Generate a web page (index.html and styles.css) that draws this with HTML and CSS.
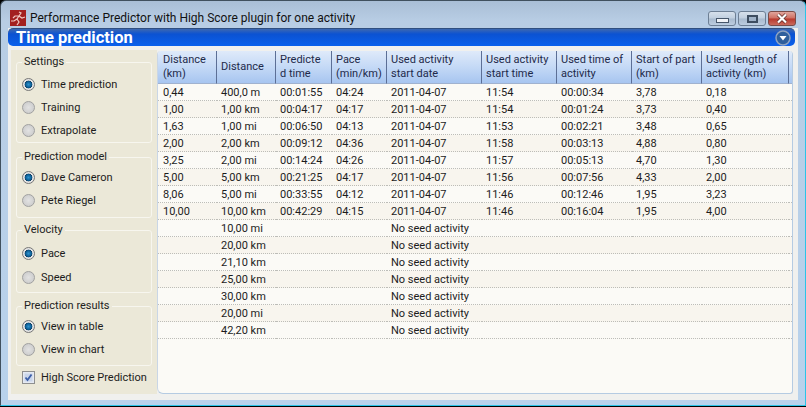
FILE: index.html
```html
<!DOCTYPE html>
<html lang="en">
  <head>
    <meta charset="UTF-8" />
    <meta name="viewport" content="width=device-width, initial-scale=1.0" />
    <title>Performance Predictor</title>
    <link rel="stylesheet" href="styles.css">
  </head>
  <body>
    <div class="ventana">
      <div class="titulo">
        <svg class="logo" width="16" height="16" viewBox="0 0 16 16">
          <rect width="16" height="16" fill="#a3201f" />
          <path d="M9 2l2 1-2 3 3 2 3-1M9 6L7 9l2 3-2 3M7 9L4 11 1 11M9 6L5 6 3 8" fill="none" stroke="#f0c8c2" stroke-width="1.2" />
        </svg>
        <span class="titulo-texto">Performance Predictor with High Score plugin for one activity</span>
        <div class="botones">
          <div class="boton"><span class="min"></span></div>
          <div class="boton"><span class="max"></span></div>
          <div class="boton cerrar">
            <svg width="16" height="11" viewBox="0 0 16 11">
              <path d="M4 1.5l8 8M12 1.5l-8 8" stroke="#5b2a26" stroke-width="3.6" />
              <path d="M4 1.5l8 8M12 1.5l-8 8" stroke="#fff" stroke-width="2.2" />
            </svg>
          </div>
        </div>
      </div>

      <div class="cliente">
        <div class="banda">
          <span>Time prediction</span>
          <div class="flecha">
            <svg width="16" height="16" viewBox="0 0 16 16">
              <circle cx="8" cy="8" r="7" fill="#2f5f9c" stroke="#8fa3c0" stroke-width="1.5" />
              <path d="M4.5 6h7L8 10.5z" fill="#fff" />
            </svg>
          </div>
        </div>

        <div class="cuerpo">
          <div class="lateral">
            <fieldset class="grupo g1">
              <legend>Settings</legend>
              <label><span class="radio activo"></span>Time prediction</label>
              <label><span class="radio"></span>Training</label>
              <label><span class="radio"></span>Extrapolate</label>
            </fieldset>
            <fieldset class="grupo g2">
              <legend>Prediction model</legend>
              <label><span class="radio activo"></span>Dave Cameron</label>
              <label><span class="radio"></span>Pete Riegel</label>
            </fieldset>
            <fieldset class="grupo g3">
              <legend>Velocity</legend>
              <label><span class="radio activo"></span>Pace</label>
              <label><span class="radio"></span>Speed</label>
            </fieldset>
            <fieldset class="grupo g4">
              <legend>Prediction results</legend>
              <label><span class="radio activo"></span>View in table</label>
              <label><span class="radio"></span>View in chart</label>
            </fieldset>
            <label class="marca">
              <svg class="check" width="13" height="13" viewBox="0 0 13 13">
                <rect x="0.5" y="0.5" width="12" height="12" fill="#e4e9f2" stroke="#8e8f8f" />
                <rect x="2.5" y="2.5" width="8" height="8" fill="#c9d5ea" />
                <path d="M3.5 6.5l2 2.5L9.5 3.5" fill="none" stroke="#3c5fa8" stroke-width="1.8" />
              </svg>
              High Score Prediction
            </label>
          </div>

          <div class="tabla-caja">
            <table>
              <colgroup>
                <col class="c-dist"><col class="c-dist"><col class="c-pred"><col class="c-pace"><col class="c-fecha"><col class="c-hora"><col class="c-hora"><col class="c-inicio"><col class="c-largo"><col>
              </colgroup>
              <thead>
                <tr>
                  <th>Distance<br>(km)</th>
                  <th>Distance</th>
                  <th>Predicte<br>d time</th>
                  <th>Pace<br>(min/km)</th>
                  <th>Used activity<br>start date</th>
                  <th>Used activity<br>start time</th>
                  <th>Used time of<br>activity</th>
                  <th>Start of part<br>(km)</th>
                  <th>Used length of<br>activity (km)</th>
                  <th></th>
                </tr>
              </thead>
              <tbody>
                <tr><td>0,44</td><td>400,0 m</td><td>00:01:55</td><td>04:24</td><td>2011-04-07</td><td>11:54</td><td>00:00:34</td><td>3,78</td><td>0,18</td><td></td></tr>
                <tr><td>1,00</td><td>1,00 km</td><td>00:04:17</td><td>04:17</td><td>2011-04-07</td><td>11:54</td><td>00:01:24</td><td>3,73</td><td>0,40</td><td></td></tr>
                <tr><td>1,63</td><td>1,00 mi</td><td>00:06:50</td><td>04:13</td><td>2011-04-07</td><td>11:53</td><td>00:02:21</td><td>3,48</td><td>0,65</td><td></td></tr>
                <tr><td>2,00</td><td>2,00 km</td><td>00:09:12</td><td>04:36</td><td>2011-04-07</td><td>11:58</td><td>00:03:13</td><td>4,88</td><td>0,80</td><td></td></tr>
                <tr><td>3,25</td><td>2,00 mi</td><td>00:14:24</td><td>04:26</td><td>2011-04-07</td><td>11:57</td><td>00:05:13</td><td>4,70</td><td>1,30</td><td></td></tr>
                <tr><td>5,00</td><td>5,00 km</td><td>00:21:25</td><td>04:17</td><td>2011-04-07</td><td>11:56</td><td>00:07:56</td><td>4,33</td><td>2,00</td><td></td></tr>
                <tr><td>8,06</td><td>5,00 mi</td><td>00:33:55</td><td>04:12</td><td>2011-04-07</td><td>11:46</td><td>00:12:46</td><td>1,95</td><td>3,23</td><td></td></tr>
                <tr><td>10,00</td><td>10,00 km</td><td>00:42:29</td><td>04:15</td><td>2011-04-07</td><td>11:46</td><td>00:16:04</td><td>1,95</td><td>4,00</td><td></td></tr>
                <tr><td></td><td>10,00 mi</td><td></td><td></td><td>No seed activity</td><td></td><td></td><td></td><td></td><td></td></tr>
                <tr><td></td><td>20,00 km</td><td></td><td></td><td>No seed activity</td><td></td><td></td><td></td><td></td><td></td></tr>
                <tr><td></td><td>21,10 km</td><td></td><td></td><td>No seed activity</td><td></td><td></td><td></td><td></td><td></td></tr>
                <tr><td></td><td>25,00 km</td><td></td><td></td><td>No seed activity</td><td></td><td></td><td></td><td></td><td></td></tr>
                <tr><td></td><td>30,00 km</td><td></td><td></td><td>No seed activity</td><td></td><td></td><td></td><td></td><td></td></tr>
                <tr><td></td><td>20,00 mi</td><td></td><td></td><td>No seed activity</td><td></td><td></td><td></td><td></td><td></td></tr>
                <tr><td></td><td>42,20 km</td><td></td><td></td><td>No seed activity</td><td></td><td></td><td></td><td></td><td></td></tr>
              </tbody>
            </table>
          </div>
        </div>
      </div>
    </div>
  </body>
</html>
```

FILE: styles.css
```css
html,
body {
  margin: 0;
  height: 100%;
  overflow: hidden;
}
body {
  background: #000;
  font-family: Roboto, "Open Sans", sans-serif;
  font-size: 11px;
  color: #1c1c1c;
}
.ventana {
  box-sizing: border-box;
  height: 406px;
  padding: 0 7px 5px 7px;
  background: linear-gradient(to bottom, #a9bed6 0px, #b8cde4 20px, #b8d2ec 100%);
  border: 1px solid #40505e;
  border-bottom-color: #2bc4e8;
  border-right-color: #2bc4e8;
  border-radius: 6px 6px 0 0;
  display: flex;
  flex-direction: column;
}
.titulo {
  height: 27px;
  display: flex;
  align-items: center;
  padding-left: 2px;
  flex-shrink: 0;
}
.logo {
  margin-right: 4px;
  margin-top: 6px;
}
.titulo-texto {
  font-size: 12px;
  color: #111;
  margin-top: 6px;
  white-space: nowrap;
}
.botones {
  margin-left: auto;
  margin-right: 2px;
  margin-top: 8px;
  display: flex;
  gap: 2px;
}
.boton {
  width: 26px;
  height: 13px;
  border: 1px solid #6d7f94;
  border-radius: 3px;
  background: linear-gradient(to bottom, #d6e0eb 0%, #c0cfdf 48%, #a8bace 52%, #bccde0 100%);
  display: flex;
  align-items: center;
  justify-content: center;
}
.cerrar {
  border-color: #7a4b47;
  background: linear-gradient(to bottom, #e0a59c 0%, #cf6f62 48%, #b8382c 52%, #c96a5d 100%);
}
.min {
  width: 11px;
  height: 3px;
  margin-top: 3px;
  background: #f0f3f7;
  border: 1px solid #46566a;
}
.max {
  width: 7px;
  height: 4px;
  background: #9fb2c8;
  border: 2px solid #3d4d60;
}
.cliente {
  flex: 1;
  display: flex;
  flex-direction: column;
  min-height: 0;
  background: #f0f0ee;
}
.banda {
  height: 18px;
  flex-shrink: 0;
  box-sizing: border-box;
  margin-right: 3px;
  padding: 0 4px 0 8px;
  display: flex;
  align-items: center;
  justify-content: space-between;
  border-radius: 5px;
  border-top: 1px solid #304f80;
  background: linear-gradient(to bottom, #3d68b0 0%, #0b52d2 30%, #0a60ec 100%);
  color: #fff;
  font-weight: bold;
  font-size: 16.5px;
}
.flecha {
  height: 16px;
}
.cuerpo {
  flex: 1;
  min-height: 0;
  display: flex;
  padding: 4px 5px 6px 3px;
}
.lateral {
  width: 146px;
  flex-shrink: 0;
  box-sizing: border-box;
  background: #ebe8d8;
  padding: 5px 5px 0 5px;
  display: flex;
  flex-direction: column;
}
.grupo {
  box-sizing: border-box;
  margin: 0;
  padding: 3px 0 0 5px;
  border: 1px solid #f7f6ef;
  border-radius: 3px;
  min-width: 0;
}
.grupo legend {
  padding: 0 2px;
  line-height: 14px;
  color: #222;
}
.grupo label {
  display: flex;
  align-items: center;
  height: 23px;
}
.g1 { height: 88px; margin-bottom: 7px; padding-top: 4px; }
.g2 { height: 68px; margin-bottom: 5px; padding-top: 2px; }
.g3 { height: 70px; margin-bottom: 6px; padding-top: 4px; }
.g3 label { height: 24px; }
.g4 { height: 67px; padding-top: 2px; }
.radio {
  box-sizing: border-box;
  width: 13px;
  height: 13px;
  margin-right: 6px;
  border-radius: 50%;
  border: 1px solid #a0a0a0;
  background: radial-gradient(circle, #e2e2e2 0%, #cfcfcf 70%, #ececec 100%);
  flex-shrink: 0;
}
.radio.activo {
  background: radial-gradient(circle, #2f93cf 0px, #0a5c92 3px, #123f62 3.6px, #e8e8e8 4.2px, #d8d8d8 100%);
  border-color: #777;
}
.marca {
  display: flex;
  align-items: center;
  margin-left: 6px;
  margin-top: 5px;
  white-space: nowrap;
}
.check {
  margin-right: 6px;
  flex-shrink: 0;
}
.tabla-caja {
  flex: 1;
  min-width: 0;
  margin-top: 1px;
  overflow: hidden;
  background: #fbfaf6;
  border: 1px solid #b5cbe2;
  border-top: none;
  border-left-color: #c9d6e6;
  border-radius: 4px 4px 3px 6px;
}
table {
  width: 100%;
  table-layout: fixed;
  border-collapse: separate;
  border-spacing: 0;
}
.c-dist { width: 59px; }
.c-pred { width: 56px; }
.c-pace { width: 55px; }
.c-fecha { width: 95px; }
.c-hora { width: 75px; }
.c-inicio { width: 70px; }
.c-largo { width: 87px; }
th {
  height: 33px;
  box-sizing: border-box;
  padding: 0 4px;
  text-align: left;
  font-weight: normal;
  line-height: 14px;
  white-space: nowrap;
  color: #1e2a4a;
  background: linear-gradient(to bottom, #dfeafa 0%, #c4d9f6 50%, #a7c5f0 100%);
  border-right: 1px solid #5c6f96;
  border-bottom: 1px solid #a0b2cf;
  vertical-align: middle;
}
th:first-child,
td:first-child {
  padding-left: 5px;
}
th:last-child {
  border-right: none;
}
td {
  height: 17px;
  box-sizing: border-box;
  padding: 1px 4px 0;
  white-space: nowrap;
  border-bottom: 1px dotted #bdbdb8;
  line-height: 15px;
}
tbody tr:nth-child(even) {
  background: #f8f5ee;
}
```
